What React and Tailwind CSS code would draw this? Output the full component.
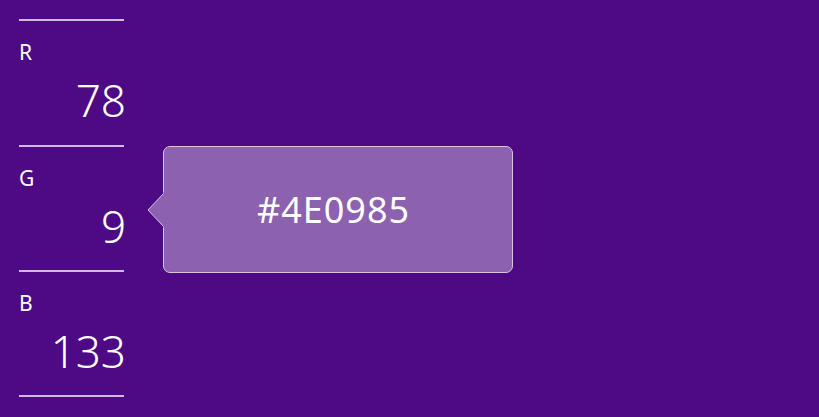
import React from "react";

const channels = [
  { label: "R", value: 78, h: "h-[126px]" },
  { label: "G", value: 9, h: "h-[125px]" },
  { label: "B", value: 133, h: "h-[125px]" },
];

function ChannelBlock({ label, value, h }) {
  return (
    <div className={`border-t-2 border-[#cdbbe0] pt-[18px] ${h}`}>
      <div className="text-[21px] leading-[26px] text-white">{label}</div>
      <div className="text-right text-[44px] font-light leading-[56px] text-white -mr-[2px] mt-[7px]">{value}</div>
    </div>
  );
}

export default function App() {
  return (
    <div
      className="w-[819px] h-[417px] bg-[#4E0985] overflow-hidden flex pt-[19px] pl-[19px]"
      style={{ fontFamily: '"Noto Sans", "Open Sans", sans-serif' }}
    >
      {/* RGB readouts */}
      <div className="w-[105px] flex flex-col">
        {channels.map((c) => (
          <ChannelBlock key={c.label} label={c.label} value={c.value} h={c.h} />
        ))}
        <div className="border-t-2 border-[#cdbbe0]" />
      </div>

      {/* hex callout */}
      <div className="relative ml-[39px] mt-[127px] w-[350px] h-[127px] rounded-[7px] border border-[#d6c6e4] bg-[#8C61AF] flex items-center justify-center pr-[9px]">
        <svg
          className="absolute left-[-17px] top-[45px]"
          width="18"
          height="36"
          viewBox="0 0 18 36"
        >
          <path d="M17 1 L1 18 L17 35" fill="#8C61AF" stroke="#d6c6e4" strokeWidth="1" />
          <rect x="16.5" y="0" width="2" height="36" fill="#8C61AF" />
        </svg>
        <span className="text-white text-[36px] tracking-[1px] leading-none">#4E0985</span>
      </div>
    </div>
  );
}
